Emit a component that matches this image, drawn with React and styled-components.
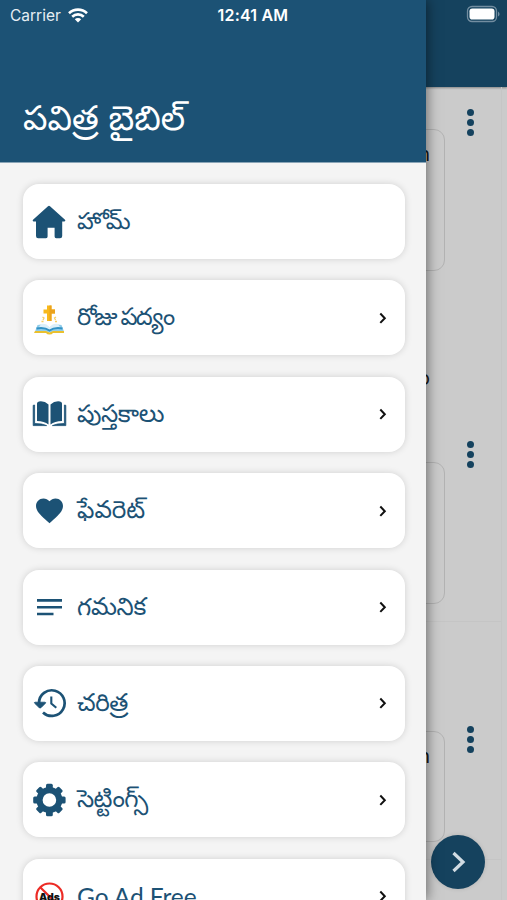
import React from "react";
import styled, { createGlobalStyle } from "styled-components";

const NAVY = "#1c5275";
const TELUGU = '"Noto Sans Telugu", "Noto Sans", sans-serif';

const GlobalStyle = createGlobalStyle`
  * { box-sizing: border-box; }
  body { margin: 0; background: #cbcbcb; }
`;

const Screen = styled.div`
  position: relative;
  width: 507px;
  height: 900px;
  overflow: hidden;
  background: #cbcbcb;
  font-family: Inter, "Liberation Sans", sans-serif;
`;

const Feed = styled.main`
  height: 100%;
  display: flex;
  flex-direction: column;
`;

const FeedHeader = styled.div`
  flex: none;
  height: 87px;
  background: #15425e;
  box-shadow: 0 1px 2px rgba(0, 0, 0, 0.35);
`;

const FeedList = styled.div`
  flex: 1;
  margin-right: 5px;
  padding-top: 1px;
  border-right: 1px solid #c6c6c6;
`;

const Post = styled.article`
  display: flex;
  justify-content: flex-end;
  align-items: flex-start;
  height: ${(p) => p.$height}px;
  border-bottom: 1px solid ${(p) => (p.$divided ? "#c5c5c5" : "transparent")};
`;

const PostBody = styled.div`
  display: flex;
  flex-direction: column;
  align-items: flex-end;
  width: 420px;
  padding-top: ${(p) => p.$top}px;
`;

const Quote = styled.div`
  width: 100%;
  height: ${(p) => p.$height}px;
  padding: 12px 14px 0 0;
  border: 1.5px solid #b3b3b3;
  border-radius: 11px;
  text-align: right;
  font-size: 20px;
  line-height: 24px;
  color: #171717;
`;

const Caption = styled.div`
  margin-top: 96px;
  padding-right: 15px;
  font-size: 19px;
  line-height: 24px;
  color: #171717;
`;

const MoreButton = styled.div`
  display: flex;
  flex-direction: column;
  align-items: center;
  gap: 3.2px;
  width: 7px;
  margin: ${(p) => p.$top}px 27px 0 22px;
`;

const Dot = styled.i`
  width: 7px;
  height: 7px;
  border-radius: 50%;
  background: #15425e;
`;

const Fab = styled.div`
  position: absolute;
  left: 431px;
  top: 835px;
  width: 54px;
  height: 54px;
  display: grid;
  place-items: center;
  border-radius: 50%;
  background: #15425e;
  box-shadow: 0 0 4px rgba(0, 0, 0, 0.12);
`;

const Drawer = styled.aside`
  position: absolute;
  inset: 0 auto 0 0;
  width: 426px;
  display: flex;
  flex-direction: column;
  background: #f4f4f4;
  box-shadow: 1px 0 12px rgba(0, 0, 0, 0.5);
`;

const DrawerHeader = styled.header`
  flex: none;
  height: 163px;
  display: flex;
  align-items: flex-end;
  padding: 0 23px 16px;
  background: ${NAVY};
  border-bottom: 1px solid #8aa5b7;
`;

const Title = styled.h1`
  margin: 0;
  font: 400 34.4px/44px ${TELUGU};
  white-space: nowrap;
  color: #fff;
`;

const Menu = styled.nav`
  flex: 1;
  min-height: 0;
  display: flex;
  flex-direction: column;
  gap: 21.4px;
  padding: 21px 21.5px 0 23px;
  overflow: hidden;
`;

const MenuRow = styled.div`
  flex: none;
  height: 75px;
  display: flex;
  align-items: center;
  padding: 0 17px 0 8px;
  border-radius: 16px;
  background: #fff;
  box-shadow: 0 0 7px rgba(0, 0, 0, 0.15);
`;

const IconBox = styled.span`
  flex: none;
  display: flex;
  width: 36px;
  height: 36px;
  margin-right: 10px;
  color: ${NAVY};
`;

const Label = styled.span`
  flex: 1;
  font: 400 ${(p) => p.$size || 24.5}px/34px ${(p) => (p.$latin ? "Lato, sans-serif" : TELUGU)};
  letter-spacing: ${(p) => p.$track || 0}px;
  white-space: nowrap;
  color: ${NAVY};
  padding-top: ${(p) => (p.$latin ? 1 : 7)}px;
`;

const StatusBar = styled.div`
  position: absolute;
  inset: 0 0 auto;
  height: 30px;
  display: grid;
  grid-template-columns: 207.5px auto 1fr;
  align-items: center;
  padding: 0 7px 0 10px;
  color: #fff;
  font-size: 15.5px;
`;

const Carrier = styled.div`
  display: flex;
  align-items: center;
  gap: 7px;
  color: #e6eef3;
`;

const Time = styled.div`
  font-size: 16px;
  font-weight: 600;
  letter-spacing: 0.2px;
`;

const Battery = styled.div`
  display: flex;
  justify-content: flex-end;
  padding-bottom: 2px;
`;

const Icon = ({ children }) => (
  <svg width="36" height="36" viewBox="0 0 36 36" fill="currentColor">{children}</svg>
);

const HomeIcon = () => (
  <Icon>
    <path d="M17 2.200q1-.8 2 0L34 15.800q1.100 1.200-.6 1.600h-2.200V32q0 2.200-2.200 2.200h-3.800q-1.600 0-1.600-1.600v-8.800h-7v8.800q0 1.600-1.600 1.600H7.200Q5 34.200 5 32V17.400H2.500Q1 17 2 15.800Z" />
  </Icon>
);

const VerseIcon = () => (
  <Icon>
    <path d="M16 5.500h4.500v4H24v4h-3.500v7.500H16v-7.500h-3.500v-4H16Z" fill="#f8b91b" />
    <path d="M18.500 5.500h2v4H24v4h-3.500v7.500h-2Z" fill="#eba21d" />
    <path d="m11.500 17 1.500 1-1 2m13-3-1.500 1 1 2M10.500 21.500h2m11.500 0h2" fill="none" stroke="#f7ce64" strokeWidth="1.300" />
    <path d="M6.500 25 4 31.500q9-1.500 14.500 1 5.500-2.500 14.500-1L30.500 25q-7-1.500-12 2.300-5-3.800-12-2.300Z" fill="#91cdeb" />
    <path d="M10 24q5-1 8.500 3.300Q22 23 27 24l2.500 4q-7-.7-11 2-4-2.700-11-2Z" fill="#dceffa" />
    <path d="M5.500 28.500q8-1.500 13 2 5-3.500 13-2" fill="none" stroke="#3292c5" strokeWidth="2" />
    <path d="M4 31h11l3.500 1.500L22 31h11v2H22q-1 1.600-3.500 1.600T15 33H3Z" fill="#eac02e" />
  </Icon>
);

const BooksIcon = () => (
  <Icon>
    <path d="M8 5.400q5.500-.8 9.500 3V28.500q-4.300-3.600-11.500-3.600V7.400q0-1.700 2-2ZM29 5.400q-5.500-.8-9.500 3V28.500q4.300-3.600 11.500-3.600V7.400q0-1.700-2-2Z" />
    <path d="M3.600 9v18.500q8 0 12 2.100H2.200V9.300ZM33.400 9v18.500q-8 0-12 2.100h13.400V9.300Z" stroke="currentColor" strokeWidth=".8" strokeLinejoin="round" />
  </Icon>
);

const HeartIcon = () => (
  <Icon>
    <path transform="translate(2.300 1.500) scale(1.350)" d="m12 21.350-1.450-1.320C5.400 15.360 2 12.280 2 8.500 2 5.420 4.420 3 7.500 3c1.740 0 3.410.81 4.500 2.090C13.090 3.810 14.760 3 16.500 3 19.580 3 22 5.420 22 8.500c0 3.780-3.400 6.860-8.550 11.540Z" />
  </Icon>
);

const NotesIcon = () => (
  <Icon><path d="M6 10.100h25v2.600H6ZM6 16.900h25v2.600H6ZM6 23.700h16.500v2.600H6Z" /></Icon>
);

const HistoryIcon = () => (
  <Icon>
    <path d="M8 18A12.800 12.800 0 1 1 12 27.400" fill="none" stroke="currentColor" strokeWidth="2.700" />
    <path d="M4 17.200h10q1.200.2.400 1.100l-4.200 4.200q-1.100 1-2.200 0l-4.300-4.200q-.8-.9.300-1.100Z" stroke="currentColor" strokeWidth=".8" />
    <path d="M20.300 11.500v7l5 4.200" fill="none" stroke="currentColor" strokeWidth="2.100" />
  </Icon>
);

const SettingsIcon = () => (
  <Icon>
    <circle cx="18.400" cy="18" r="9.900" fill="none" stroke="currentColor" strokeWidth="6.200" />
    {[0, 45, 90, 135, 180, 225, 270, 315].map((angle) => (
      <rect key={angle} x="15" y="1.800" width="6.800" height="7" rx="1.500" transform={`rotate(${angle} 18.400 18)`} />
    ))}
  </Icon>
);

const NoAdsIcon = () => (
  <Icon>
    <circle cx="18.500" cy="18.500" r="13" fill="#fff" stroke="#ec2b25" strokeWidth="2.200" />
    <path d="m9.500 9.500 18 18" stroke="#ec2b25" strokeWidth="2.200" />
    <text x="18.500" y="22.500" textAnchor="middle" fontFamily="Inter, sans-serif" fontSize="10.500" fontWeight="900" fill="#111">Ads</text>
  </Icon>
);

const Chevron = () => (
  <svg width="10" height="14" viewBox="0 0 10 14" fill="none" stroke="#111" strokeWidth="2">
    <path d="m2.300 2.500 4.500 4.700-4.500 4.700" />
  </svg>
);

const ITEMS = [
  { label: "హోమ్", Glyph: HomeIcon, plain: true, size: 23.5, track: -1.5 },
  { label: "రోజు పద్యం", Glyph: VerseIcon, size: 24, track: -1.9 },
  { label: "పుస్తకాలు", Glyph: BooksIcon, track: -0.4 },
  { label: "ఫేవరెట్", Glyph: HeartIcon },
  { label: "గమనిక", Glyph: NotesIcon, track: -0.3 },
  { label: "చరిత్ర", Glyph: HistoryIcon, track: -0.4 },
  { label: "సెట్టింగ్స్", Glyph: SettingsIcon, track: -0.6 },
  { label: "Go Ad Free", Glyph: NoAdsIcon, latin: true, track: -0.1 },
];

const More = ({ top = 20.5 }) => <MoreButton $top={top}><Dot /><Dot /><Dot /></MoreButton>;

export default function App() {
  return (
    <Screen>
      <GlobalStyle />
      <Feed>
        <FeedHeader />
        <FeedList>
          <Post $height={332}>
            <PostBody $top={41}><Quote $height={142}>n</Quote><Caption>o</Caption></PostBody>
            <More />
          </Post>
          <Post $height={202} $divided>
            <PostBody $top={42}><Quote $height={142} /></PostBody>
            <More />
          </Post>
          <Post $height={84} />
          <Post $height={154} $divided>
            <PostBody $top={25}><Quote $height={111}>n</Quote></PostBody>
            <More top={19.5} />
          </Post>
        </FeedList>
      </Feed>
      <Fab>
        <svg width="18" height="24" viewBox="0 0 18 24" fill="none" stroke="#d1dce3" strokeWidth="3.200">
          <path d="m4.500 3 9.500 9L4.500 21" />
        </svg>
      </Fab>
      <Drawer>
        <DrawerHeader><Title>పవిత్ర బైబిల్</Title></DrawerHeader>
        <Menu>
          {ITEMS.map(({ label, Glyph, plain, latin, size, track }) => (
            <MenuRow key={label}>
              <IconBox><Glyph /></IconBox>
              <Label $latin={latin} $size={size} $track={track}>{label}</Label>
              {!plain && <Chevron />}
            </MenuRow>
          ))}
        </Menu>
      </Drawer>
      <StatusBar>
        <Carrier>
          Carrier
          <svg width="20" height="15" viewBox="0 0 20 15" fill="none" stroke="#fff" strokeWidth="2.600">
            <path d="M1 5.200a13 13 0 0 1 18 0M4.200 8.700a8.300 8.300 0 0 1 11.600 0" />
            <path d="M6.800 11.200a4.600 4.600 0 0 1 6.400 0L10 14.500Z" fill="#fff" stroke="none" />
          </svg>
        </Carrier>
        <Time>12:41 AM</Time>
        <Battery>
          <svg width="34" height="18" viewBox="0 0 34 18">
            <rect x="1.500" y="1.500" width="29" height="15" rx="4.500" fill="none" stroke="#728da0" strokeWidth="1.300" />
            <rect x="3.500" y="3.500" width="25" height="11" rx="2.800" fill="#fff" />
            <path d="M32 6.500q1.600 1 1.600 2.500T32 11.500Z" fill="#728da0" />
          </svg>
        </Battery>
      </StatusBar>
    </Screen>
  );
}
